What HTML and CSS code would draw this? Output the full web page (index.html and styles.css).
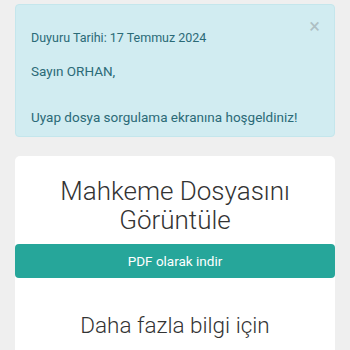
FILE: index.html
```html
<!DOCTYPE html>
<html lang="tr">
<head>
<meta charset="utf-8">
<link rel="stylesheet" href="styles.css">
</head>
<body>
<div class="page">
  <div class="alert">
    <span class="close">&times;</span>
    <p class="date">Duyuru Tarihi: 17 Temmuz 2024</p>
    <p class="greet">Sayın ORHAN,</p>
    <p class="msg">Uyap dosya sorgulama ekranına hoşgeldiniz!</p>
  </div>
  <div class="card">
    <h1 class="title">Mahkeme Dosyasını Görüntüle</h1>
    <button class="btn">PDF olarak indir</button>
    <h2 class="subtitle">Daha fazla bilgi için</h2>
  </div>
</div>
</body>
</html>
```
FILE: styles.css
```css
html, body {
  margin: 0;
  padding: 0;
  background: #efefef;
  font-family: Roboto, "Liberation Sans", sans-serif;
}
.page {
  padding: 4px 15px 0 15px;
  display: flex;
  flex-direction: column;
  gap: 19px;
}
.alert {
  position: relative;
  background: #d1ecf1;
  border: 1px solid #c4e6ec;
  border-radius: 4px;
  color: #2b6a77;
  padding: 24px 15px 10px 15px;
}
.alert p {
  margin: 0;
  font-size: 13.5px;
  line-height: 18px;
}
.alert .date {
  font-size: 12.5px;
}
.alert .greet {
  margin-top: 15px;
}
.alert .msg {
  margin-top: 28px;
}
.close {
  position: absolute;
  right: 14px;
  top: 11px;
  font-size: 20px;
  line-height: 20px;
  color: #aebfc4;
}
.card {
  background: #fff;
  border-radius: 5px;
  display: flex;
  flex-direction: column;
  align-items: stretch;
  padding: 21px 0 20px 0;
}
.title {
  margin: 0 0 9px 0;
  font-weight: 300;
  font-size: 26px;
  line-height: 29px;
  text-align: center;
  color: #333;
  padding: 0 40px;
}
.btn {
  height: 34px;
  border: none;
  border-radius: 4px;
  background: #26a69a;
  color: #fff;
  font-family: Roboto, "Liberation Sans", sans-serif;
  font-size: 13.5px;
}
.subtitle {
  margin: 34px 0 0 0;
  font-weight: 300;
  font-size: 22.5px;
  line-height: 27px;
  text-align: center;
  color: #333;
}
```
